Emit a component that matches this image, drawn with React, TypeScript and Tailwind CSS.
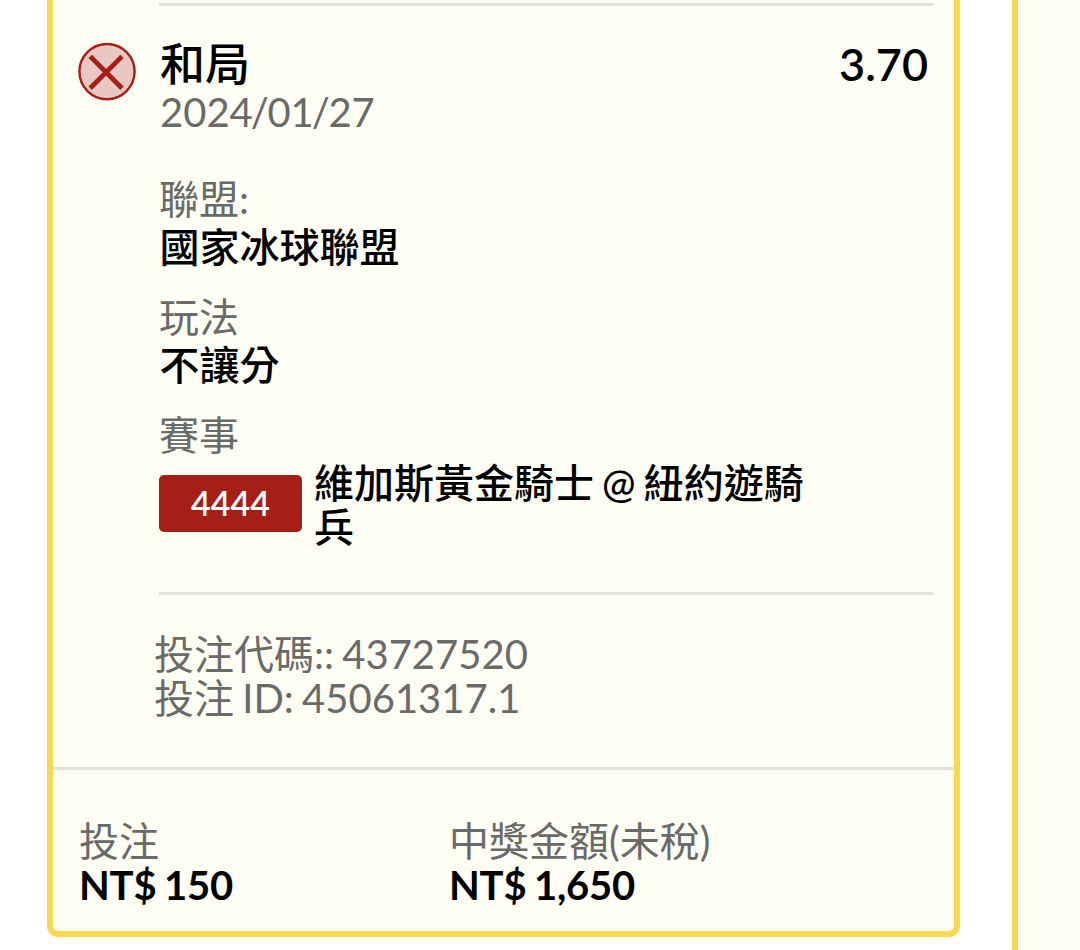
interface Detail {
  label: string;
  value: string;
}

const DETAILS: Detail[] = [
  { label: "聯盟:", value: "國家冰球聯盟" },
  { label: "玩法", value: "不讓分" },
];

const TOTALS = [
  { label: "投注", value: "NT$ 150" },
  { label: "中獎金額(未稅)", value: "NT$ 1,650" },
];

function LostIcon() {
  return (
    <svg aria-hidden="true" viewBox="0 0 58 58" className="mt-[43px] h-[58px] w-[58px] shrink-0">
      <circle cx="29" cy="28.6" r="27.6" fill="#e9c8c3" stroke="#a51f16" strokeWidth="2.4" />
      <path d="M12.2 13.4L44 45.2M44 13.4L12.2 45.2" fill="none" stroke="#a51f16" strokeWidth="4.8" />
    </svg>
  );
}

// slashes in the date sit tighter than the digits
function DateText({ value }: { value: string }) {
  const [year, month, day] = value.split("/");
  return (
    <p className="text-[#6a6a68]">
      {year}
      <span className="-mr-[1.5px] -ml-[2px]">/</span>
      {month}
      <span className="-mr-[1.5px] -ml-[2px]">/</span>
      {day}
    </p>
  );
}

function Selection() {
  return (
    <div className="flex pl-[25px] pr-5">
      <LostIcon />
      <div className="ml-[23px] flex-1 border-b-[3px] border-[#e3e3dc] pb-[43px]">
        <div className="h-[6px] border-b-[3px] border-[#e3e3dc]" />
        <div className="flex justify-between pt-[36px] pr-1.5 text-[45px] leading-[44px]">
          <h2 className="ml-px font-medium">和局</h2>
          <span className="font-semibold">3.70</span>
        </div>
        <div className="mt-1 ml-px">
          <DateText value="2024/01/27" />
        </div>

        <dl className="mt-[43px]">
          {DETAILS.map((d) => (
            <div key={d.label} className="mb-[26px]">
              <dt className="mb-1 text-[#6a6a68]">{d.label}</dt>
              <dd className="ml-[0.5px] font-medium">{d.value}</dd>
            </div>
          ))}
          <dt className="text-[#6a6a68]">賽事</dt>
          <dd className="mt-1 flex">
            <span className="mt-3.5 flex h-[57px] w-[143px] shrink-0 items-center justify-center rounded-[5px] bg-[#a51f16] pb-px text-[34px] font-semibold text-white">
              4444
            </span>
            <span className="ml-3 w-[500px] font-medium [word-spacing:-2px]">維加斯黃金騎士 @ 紐約遊騎兵</span>
          </dd>
        </dl>
      </div>
    </div>
  );
}

export default function App() {
  return (
    <div
      lang="zh-Hant"
      className="flex h-[950px] w-[1080px] overflow-hidden bg-white pl-[47px] text-[40px] leading-[44px] text-black [font-family:Lato,'Noto_Sans_CJK_TC',sans-serif]"
    >
      <article className="h-[937px] w-[913px] shrink-0 rounded-b-[11px] border-6 border-t-0 border-[#f6d851] bg-[#fefef4]">
        <Selection />
        <div className="mt-[37px] h-[135px] pl-[101px] text-[#6a6a68] [word-spacing:-2px]">
          <p>投注代碼:: 43727520</p>
          <p>投注 ID: 45061317.1</p>
        </div>
        <footer className="flex border-t-[3px] border-[#e3e3dc] pt-[49px] pl-[26px]">
          {TOTALS.map((item) => (
            <div key={item.label} className="w-[370px]">
              <p className="text-[#6a6a68]">{item.label}</p>
              <p className="font-bold tracking-[-0.2px] [word-spacing:-2px]">{item.value}</p>
            </div>
          ))}
        </footer>
      </article>
      <aside className="ml-[52px] h-full flex-1 border-l-6 border-[#f6d851] bg-[#fefef4]" />
    </div>
  );
}
